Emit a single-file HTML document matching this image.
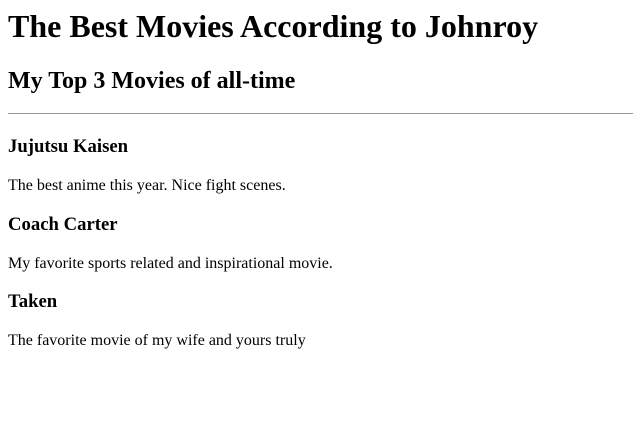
<!DOCTYPE html>
<html><head><style>
body{margin:8px;font-family:"Liberation Serif",serif;color:#000;background:#fff}
h1{font-size:32px;margin:8px 0 0;line-height:37px}
h2{font-size:24px;margin:22px 0 18px;line-height:28px}
hr{margin:0;border:0;border-top:1px solid #999;height:0}
h3{font-size:18.72px;margin:18.5px 0 0;line-height:22px}
p{font-size:16px;margin:19px 0 0;line-height:18px}
</style></head><body>
<h1>The Best Movies According to Johnroy</h1>
<h2>My Top 3 Movies of all-time</h2>
<hr>
<h3 style="margin-top:22px">Jujutsu Kaisen</h3>
<p>The best anime this year. Nice fight scenes.</p>
<h3>Coach Carter</h3>
<p>My favorite sports related and inspirational movie.</p>
<h3>Taken</h3>
<p>The favorite movie of my wife and yours truly</p>
</body></html>
